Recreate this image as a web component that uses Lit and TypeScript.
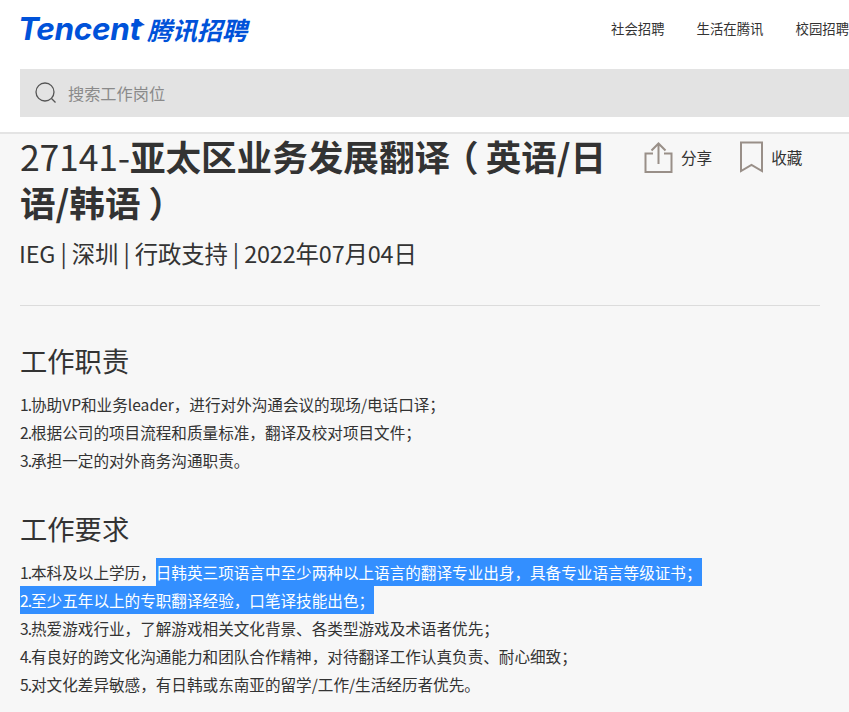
import { LitElement, html, css } from "lit";
import { customElement } from "lit/decorators.js";

@customElement("app-root")
export class AppRoot extends LitElement {
  static styles = css`
    :host {
      display: block;
      width: 849px;
      height: 712px;
      overflow: hidden;
      background: #f7f7f7;
      color: #333;
      font-family: "Noto Sans CJK SC", sans-serif;
    }
    .header {
      background: #fff;
      border-bottom: 2px solid #e4e4e4;
      box-sizing: border-box;
      padding: 0 0 0 20px;
      overflow: hidden;
      height: 134px;
    }
    .top {
      display: flex;
      align-items: flex-start;
      height: 69px;
      white-space: nowrap;
    }
    .logo {
      position: relative;
      display: flex;
      align-items: center;
      color: #0052d9;
      font-style: italic;
      font-weight: 700;
      width: 591px;
      height: 58px;
      flex: none;
    }
    .logo-en {
      font-family: "Inter", sans-serif;
      font-size: 31.5px;
      letter-spacing: -0.3px;
      font-weight: 700;
      line-height: 30px;
      margin-left: -2px;
    }
    .logo-arrow {
      position: absolute;
      left: 113px;
      top: 20px;
    }
    .logo-cn {
      font-family: "Noto Sans CJK SC", sans-serif;
      font-size: 25px;
      margin-left: 6px;
      line-height: 30px;
    }
    .nav {
      display: flex;
      gap: 32px;
      font-size: 13.4px;
      line-height: 57px;
      flex: none;
    }
    .search {
      display: flex;
      align-items: center;
      gap: 11px;
      height: 48px;
      width: 900px;
      background: #e3e3e3;
      padding-left: 15px;
      font-size: 16.2px;
      color: #8a8a8a;
    }
    .search svg { display: block; flex: none; }
    .main { padding: 0 29px 0 20px; }
    .head {
      display: flex;
      align-items: flex-start;
    }
    .title {
      width: 600px;
      flex: none;
      margin: -1px 0 0;
      font-size: 35.6px;
      line-height: 46px;
      font-weight: 400;
      color: #333;
    }
    .title b { font-weight: 700; }
    .title .id { letter-spacing: -0.2px; }
    .title .open {
      font-family: "Noto Sans CJK TC", sans-serif;
      font-weight: 700;
      margin: 0 7px 0 -7px;
    }
    .title .close {
      font-family: "Noto Sans CJK TC", sans-serif;
      font-weight: 700;
      margin-left: 8px;
    }
    .actions {
      display: flex;
      margin-left: 24px;
      padding-top: 7px;
      font-size: 15.6px;
      white-space: nowrap;
    }
    .action {
      display: flex;
      align-items: center;
      gap: 8px;
      height: 32px;
    }
    .action + .action { margin-left: 28px; }
    .action svg { display: block; flex: none; }
    .meta {
      font-size: 23.4px;
      line-height: 32px;
      margin: 12px 0 0 -1px;
      letter-spacing: -0.13px;
    }
    .rule {
      height: 1px;
      background: #dcdcdc;
      margin-top: 36px;
    }
    h2 {
      margin: 0;
      font-size: 27.3px;
      font-weight: 400;
      line-height: 38px;
    }
    .duty { margin-top: 35px; }
    .req { margin-top: 35px; }
    .list {
      margin-top: 11px;
      font-size: 15.6px;
      line-height: 28px;
      white-space: nowrap;
    }
    .line { height: 28px; }
    .num { letter-spacing: -1px; }
    .sel {
      display: inline-block;
      background: #338fff;
      color: #fff;
      height: 28px;
      vertical-align: top;
    }
  `;

  render() {
    return html`
      <div class="header">
        <div class="top">
          <div class="logo">
            <span class="logo-en">Tencent</span>
            <svg class="logo-arrow" width="12" height="10" viewBox="0 0 12 10" fill="#0052d9"><path d="M5 0l7 5-8 1.500z"></path></svg>
            <span class="logo-cn">腾讯招聘</span>
          </div>
          <div class="nav">
            <span>社会招聘</span><span>生活在腾讯</span><span>校园招聘</span>
          </div>
        </div>
        <div class="search">
          <svg width="22" height="22" viewBox="0 0 22 22" fill="none" stroke="#555" stroke-width="1.3">
            <circle cx="10" cy="10" r="9"></circle>
            <path d="M16.5 16.5l4 4"></path>
          </svg>
          <span>搜索工作岗位</span>
        </div>
      </div>
      <div class="main">
        <div class="head">
          <h1 class="title"><span class="id">27141-</span><b>亚太区业务发展翻译<span class="open">（</span>英语/日语/韩语<span class="close">）</span></b></h1>
          <div class="actions">
            <div class="action">
              <svg width="29" height="31" viewBox="0 0 29 31" fill="none" stroke="#998f88" stroke-width="2">
                <path d="M9 11.5H1.5V30h26V11.5H20"></path>
                <path d="M14.500 22V2M7.500 8.500l7-7 7 7"></path>
              </svg>
              <span>分享</span>
            </div>
            <div class="action">
              <svg width="23" height="32" viewBox="0 0 23 32" fill="none" stroke="#998f88" stroke-width="2">
                <path d="M1 1.500h21v28.500l-10.500-6-10.500 6z"></path>
              </svg>
              <span>收藏</span>
            </div>
          </div>
        </div>
        <div class="meta">IEG | 深圳 | 行政支持 | 2022年07月04日</div>
        <div class="rule"></div>
        <h2 class="duty">工作职责</h2>
        <div class="list">
          <div class="line"><span class="num">1.</span>协助VP和业务leader，进行对外沟通会议的现场/电话口译；</div>
          <div class="line"><span class="num">2.</span>根据公司的项目流程和质量标准，翻译及校对项目文件；</div>
          <div class="line"><span class="num">3.</span>承担一定的对外商务沟通职责。</div>
        </div>
        <h2 class="req">工作要求</h2>
        <div class="list">
          <div class="line"><span class="num">1.</span>本科及以上学历，<span class="sel">日韩英三项语言中至少两种以上语言的翻译专业出身，具备专业语言等级证书；</span></div>
          <div class="line"><span class="sel"><span class="num">2.</span>至少五年以上的专职翻译经验，口笔译技能出色；</span></div>
          <div class="line"><span class="num">3.</span>热爱游戏行业，了解游戏相关文化背景、各类型游戏及术语者优先；</div>
          <div class="line"><span class="num">4.</span>有良好的跨文化沟通能力和团队合作精神，对待翻译工作认真负责、耐心细致；</div>
          <div class="line"><span class="num">5.</span>对文化差异敏感，有日韩或东南亚的留学/工作/生活经历者优先。</div>
        </div>
      </div>
    `;
  }
}
